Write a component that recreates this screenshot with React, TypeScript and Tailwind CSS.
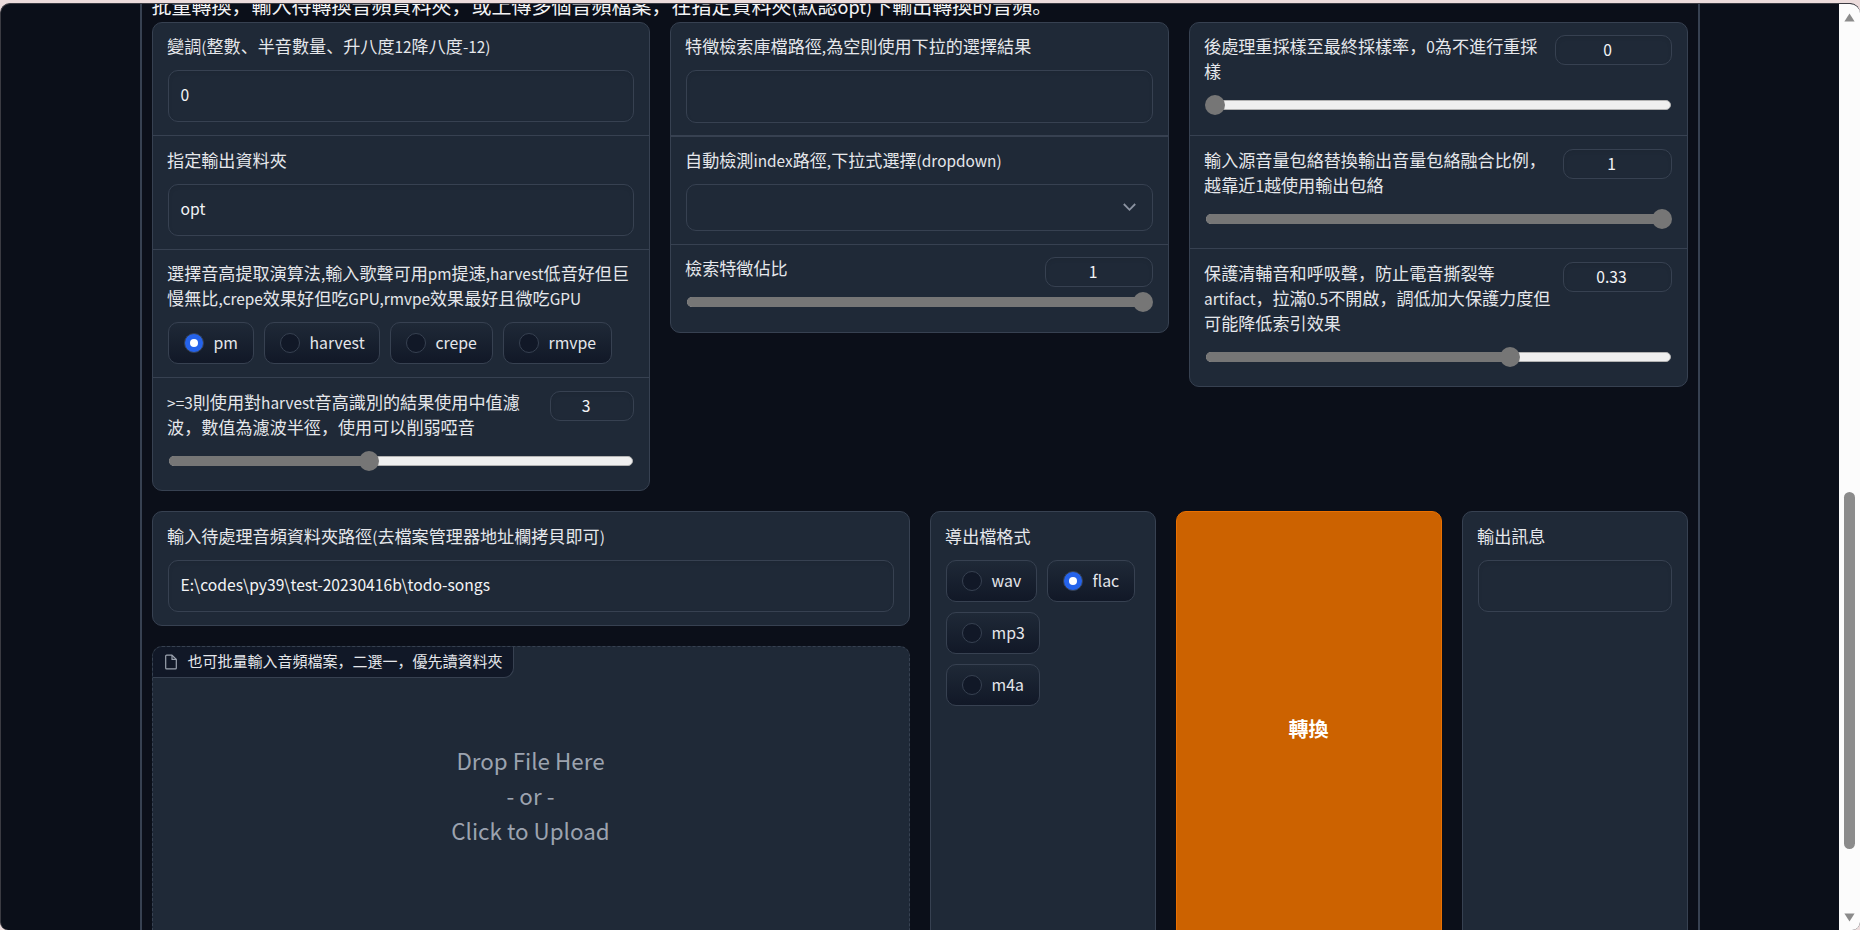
import React from "react";

function Mixed({ text }: { text: string }) {
  const runs = text.split(/([\x20-\x7e]+)/).filter(Boolean);
  return (
    <>
      {runs.map((run, i) =>
        /^[\x20-\x7e]/.test(run) ? (
          <span key={i} className="text-[0.9em]">{run}</span>
        ) : (
          <React.Fragment key={i}>{run}</React.Fragment>
        )
      )}
    </>
  );
}

function Label({ lines }: { lines: string[] }) {
  return (
    <div className="-mt-0.5 mb-0.5 ml-[0.6px] shrink-0 text-[17.1px] leading-[25px] text-[#e5e7eb]">
      {lines.map((line) => (
        <div key={line} className="h-[25px] whitespace-nowrap">
          <Mixed text={line} />
        </div>
      ))}
    </div>
  );
}

function Field({ value = "", className = "h-[52px]" }: { value?: string; className?: string }) {
  return (
    <div className={`mx-px mt-2.5 flex shrink-0 items-center rounded-[10px] border border-[#374151] px-3 pb-0.5 text-[17.4px] text-[#f3f4f6] shadow-[inset_0_2px_4px_0_rgba(0,0,0,0.06)] ${className}`}>
      <Mixed text={value} />
    </div>
  );
}

function Radio({ label, checked = false, className }: { label: string; checked?: boolean; className: string }) {
  return (
    <div className={`flex h-[42px] items-center gap-2.5 rounded-[10px] border border-[#374151] bg-linear-to-b from-[#1f2937] to-[#111827] pl-[15px] text-[17.6px] text-[#e5e7eb] ${className}`}>
      <span className={`flex size-5 items-center justify-center rounded-full border border-[#374151] ${checked ? "bg-[#2563eb]" : "bg-[#111827]"}`}>
        {checked && <span className="size-2 rounded-full bg-white" />}
      </span>
      <span className="pb-0.5">
        <Mixed text={label} />
      </span>
    </div>
  );
}

function Slider({ position, className }: { position: number; className: string }) {
  return (
    <div className={`relative mx-px flex h-5 shrink-0 items-center px-px ${className}`}>
      <div className="h-2.5 w-full overflow-hidden rounded-full border border-[#b2b2b2] bg-[#efefef]" />
      <div className="absolute top-[5px] left-px h-2.5 rounded-l-full bg-[#767676]" style={{ width: position }} />
      <div className="absolute top-0 size-5 rounded-full bg-[#767676]" style={{ left: position - 10 }} />
    </div>
  );
}

function SliderHead({ lines, value, className }: { lines: string[]; value: string; className: string }) {
  return (
    <div className="flex justify-between">
      <Label lines={lines} />
      <div className={`mr-px flex h-[30px] items-center justify-center rounded-[10px] border border-[#374151] pr-[11px] pb-px text-[17.4px] text-[#f3f4f6] shadow-[inset_0_2px_4px_0_rgba(0,0,0,0.06)] ${className}`}>
        <Mixed text={value} />
      </div>
    </div>
  );
}

const panel = "flex flex-col rounded-[10px] border border-[#374151] bg-[#1f2937]";
const block = "flex flex-col px-3.5 pt-3";

export default function App() {
  return (
    <div className="h-[930px] w-[1860px] overflow-hidden bg-[#ecdcdc] pt-[3px] font-['Noto_Sans_CJK_SC','Noto_Sans_CJK_TC',sans-serif]">
      <div className="flex h-[927px] overflow-hidden rounded-t-[10px] rounded-b-[8px] border-t border-l border-[#3b3b42] bg-[#0b0f19]">
        <div className="flex min-w-0 flex-1 justify-center overflow-hidden pr-px">
          <main className="flex h-[960px] w-[1560px] shrink-0 flex-col border-x-2 border-[#374151] px-2.5">
            <div className="-mt-[13px] mb-px h-[30px] text-[20px] leading-[30px] whitespace-nowrap text-[#f3f4f6]">
              <Mixed text="批量轉換，輸入待轉換音頻資料夾，或上傳多個音頻檔案，在指定資料夾(默認opt)下輸出轉換的音頻。" />
            </div>

            <div className="grid grid-cols-[498px_499px_499px] items-start gap-5">
              <section className={panel}>
                <div className={`${block} h-[112px]`}>
                  <Label lines={["變調(整數、半音數量、升八度12降八度-12)"]} />
                  <Field value="0" />
                </div>
                <div className="flex h-[114px] flex-col border-t border-[#374151] px-3.5 pt-[13px]">
                  <Label lines={["指定輸出資料夾"]} />
                  <Field value="opt" />
                </div>
                <div className={`${block} h-[128px] border-t border-[#374151]`}>
                  <Label lines={["選擇音高提取演算法,輸入歌聲可用pm提速,harvest低音好但巨", "慢無比,crepe效果好但吃GPU,rmvpe效果最好且微吃GPU"]} />
                  <div className="mx-px mt-2.5 flex gap-2.5">
                    <Radio label="pm" checked className="w-[86px]" />
                    <Radio label="harvest" className="w-[116px]" />
                    <Radio label="crepe" className="w-[103px]" />
                    <Radio label="rmvpe" className="w-[109px]" />
                  </div>
                </div>
                <div className="flex h-[113px] flex-col border-t border-[#374151] px-3.5 pt-[13px]">
                  <SliderHead lines={[">=3則使用對harvest音高識別的結果使用中值濾", "波，數值為濾波半徑，使用可以削弱啞音"]} value="3" className="w-[84px]" />
                  <Slider position={201} className="mt-2.5" />
                </div>
              </section>

              <section className={panel}>
                <div className={`${block} h-[112px]`}>
                  <Label lines={["特徵檢索庫檔路徑,為空則使用下拉的選擇結果"]} />
                  <Field className="h-[53px]" />
                </div>
                <div className="flex h-[109px] flex-col border-t-2 border-[#374151] px-3.5 pt-3">
                  <Label lines={["自動檢測index路徑,下拉式選擇(dropdown)"]} />
                  <div className="mx-px mt-2.5 flex h-[47px] items-center justify-end rounded-[10px] border border-[#374151] pr-4">
                    <svg width="13" height="9" viewBox="0 0 13 9" fill="none" stroke="#8b93a1" strokeWidth="1.8">
                      <path d="M0.8 1 L6.5 6.8 L12.2 1" />
                    </svg>
                  </div>
                </div>
                <div className={`${block} h-[88px] border-t border-[#374151]`}>
                  <SliderHead lines={["檢索特徵佔比"]} value="1" className="w-[108px]" />
                  <Slider position={457} className="mt-[5px]" />
                </div>
              </section>

              <section className={panel}>
                <div className={`${block} h-[112px]`}>
                  <SliderHead lines={["後處理重採樣至最終採樣率，0為不進行重採", "樣"]} value="0" className="w-[117px]" />
                  <Slider position={10} className="mt-2.5" />
                </div>
                <div className="flex h-[113px] flex-col border-t border-[#374151] px-3.5 pt-[13px]">
                  <SliderHead lines={["輸入源音量包絡替換輸出音量包絡融合比例，", "越靠近1越使用輸出包絡"]} value="1" className="w-[109px]" />
                  <Slider position={457} className="mt-2.5" />
                </div>
                <div className="flex h-[138px] flex-col border-t border-[#374151] px-3.5 pt-[13px]">
                  <SliderHead lines={["保護清輔音和呼吸聲，防止電音撕裂等", "artifact，拉滿0.5不開啟，調低加大保護力度但", "可能降低索引效果"]} value="0.33" className="w-[109px]" />
                  <Slider position={305} className="mt-[9.5px]" />
                </div>
              </section>
            </div>

            <div className="mt-5 flex h-[437px] shrink-0 gap-5">
              <div className="flex w-[758px] shrink-0 flex-col gap-5">
                <section className={`${panel} h-[115px] shrink-0 px-3.5 pt-[13px]`}>
                  <Label lines={["輸入待處理音頻資料夾路徑(去檔案管理器地址欄拷貝即可)"]} />
                  <Field value="E:\codes\py39\test-20230416b\todo-songs" />
                </section>
                <section className="flex flex-1 flex-col items-start overflow-hidden rounded-[10px] border border-dashed border-[#374151] bg-[#1f2937]">
                  <div className="flex h-[31px] w-[361px] shrink-0 items-center rounded-br-[10px] border-r border-b border-[#374151] bg-[#111827] pl-3 text-[15px] whitespace-nowrap text-[#e5e7eb]">
                    <svg width="12" height="16" viewBox="0 0 12 16" fill="none" stroke="#9ca3af" strokeWidth="1.2" strokeLinejoin="round">
                      <path d="M7 1.2H1.6a.9.9 0 0 0-.9.9v11.8a.9.9 0 0 0 .9.9h8.8a.9.9 0 0 0 .9-.9V5.4z" />
                      <path d="M7 1.2V5.4h4.3" />
                    </svg>
                    <span className="pb-px pl-[11px]">也可批量輸入音頻檔案，二選一，優先讀資料夾</span>
                  </div>
                  <div className="mt-[65px] w-full text-center text-[22.4px] leading-[35px] text-[#9ca3af]">
                    <div>Drop File Here</div>
                    <div>- or -</div>
                    <div>Click to Upload</div>
                  </div>
                </section>
              </div>
              <section className={`${panel} w-[226px] shrink-0 px-3.5 pt-[13px]`}>
                <Label lines={["導出檔格式"]} />
                <div className="mx-px mt-2.5 flex flex-wrap gap-2.5">
                  <Radio label="wav" className="w-[91px]" />
                  <Radio label="flac" checked className="w-[88px]" />
                  <Radio label="mp3" className="w-[94px]" />
                  <Radio label="m4a" className="w-[94px]" />
                </div>
              </section>
              <button className="w-[266px] shrink-0 rounded-[10px] border border-[#ea7000] bg-[#cc6200] pb-px text-[20px] font-bold text-white">轉換</button>
              <section className={`${panel} w-[226px] shrink-0 px-3.5 pt-[13px]`}>
                <Label lines={["輸出訊息"]} />
                <Field />
              </section>
            </div>
          </main>
        </div>
        <aside className="flex w-[21px] shrink-0 flex-col items-center bg-[#fcfcfc] pt-[9px] pb-2">
          <svg width="11" height="9" viewBox="0 0 11 9" fill="#8b8b8b"><path d="M5.5 0.5 L10.6 8.6 H0.4 Z" /></svg>
          <div className="mt-[470px] h-[357px] w-[11px] rounded-full bg-[#8b8b8b]" />
          <svg className="mt-auto" width="11" height="9" viewBox="0 0 11 9" fill="#8b8b8b"><path d="M0.4 0.4 H10.6 L5.5 8.5 Z" /></svg>
        </aside>
      </div>
    </div>
  );
}
